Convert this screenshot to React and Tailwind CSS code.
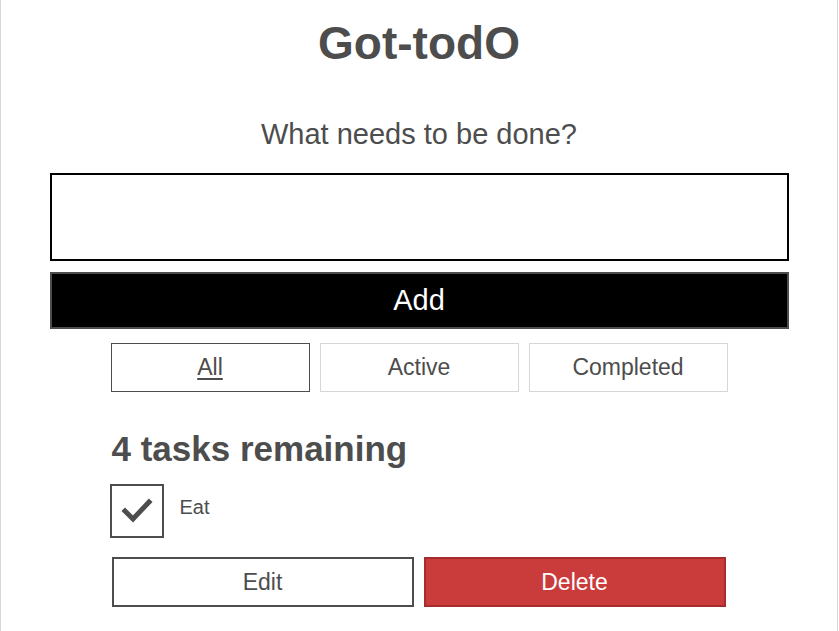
import { useState } from 'react';

const FILTERS = ['All', 'Active', 'Completed'];

export default function App() {
  const [filter, setFilter] = useState('All');
  const [name, setName] = useState('');

  return (
    <div className="min-h-screen bg-white font-['Liberation_Sans',Arial,sans-serif] text-[#4d4d4d]">
      <div className="w-[838px] min-h-[631px] border-x border-[#d6d6d6] bg-white pt-[17px]">
        <h1 className="text-center text-[46px] font-bold leading-[53px]">Got-todO</h1>

        <form className="mt-[47px] flex flex-col items-center" onSubmit={(e) => e.preventDefault()}>
          <label htmlFor="new-todo" className="text-[29px] leading-[34px]">
            What needs to be done?
          </label>
          <input
            id="new-todo"
            type="text"
            value={name}
            onChange={(e) => setName(e.target.value)}
            className="mt-[22px] h-[88px] w-[739px] border-2 border-black px-8 text-[29px] outline-none"
          />
          <button
            type="submit"
            className="mt-[11px] h-[57px] w-[739px] border-2 border-[#4d4d4d] bg-black text-[29px] leading-none text-white"
          >
            Add
          </button>
        </form>

        <div className="mt-[14px] flex justify-center gap-[10px]">
          {FILTERS.map((f) => (
            <button
              key={f}
              type="button"
              onClick={() => setFilter(f)}
              className={
                f === filter
                  ? 'h-[49px] w-[199px] border border-[#4d4d4d] text-[23px] leading-none underline underline-offset-[3px]'
                  : 'h-[49px] w-[199px] border border-[#d6d6d6] text-[23px] leading-none'
              }
            >
              {f}
            </button>
          ))}
        </div>

        <div className="mx-auto w-[615px]">
          <h2 className="mt-[37px] text-[35px] font-bold leading-[40px]">4 tasks remaining</h2>

          <div className="mt-[15px] flex items-start">
            <div className="-ml-[2px] flex h-[54px] w-[54px] items-center justify-center border-2 border-[#4d4d4d]">
              <svg width="32" height="28" viewBox="0 0 32 28">
                <path d="M4 14 L12 22 L28 5" fill="none" stroke="#4d4d4d" strokeWidth="5" strokeLinecap="square" />
              </svg>
            </div>
            <span className="ml-[16px] pt-[12px] text-[20px] leading-[23px]">Eat</span>
          </div>

          <div className="mt-[19px] flex gap-[10px]">
            <button
              type="button"
              className="h-[50px] w-[302px] border-2 border-[#4d4d4d] bg-white text-[23px] leading-none"
            >
              Edit
            </button>
            <button
              type="button"
              className="h-[50px] w-[302px] border-2 border-[#a72d2d] bg-[#ca3c3c] text-[23px] leading-none text-white"
            >
              Delete
            </button>
          </div>
        </div>
      </div>
    </div>
  );
}
